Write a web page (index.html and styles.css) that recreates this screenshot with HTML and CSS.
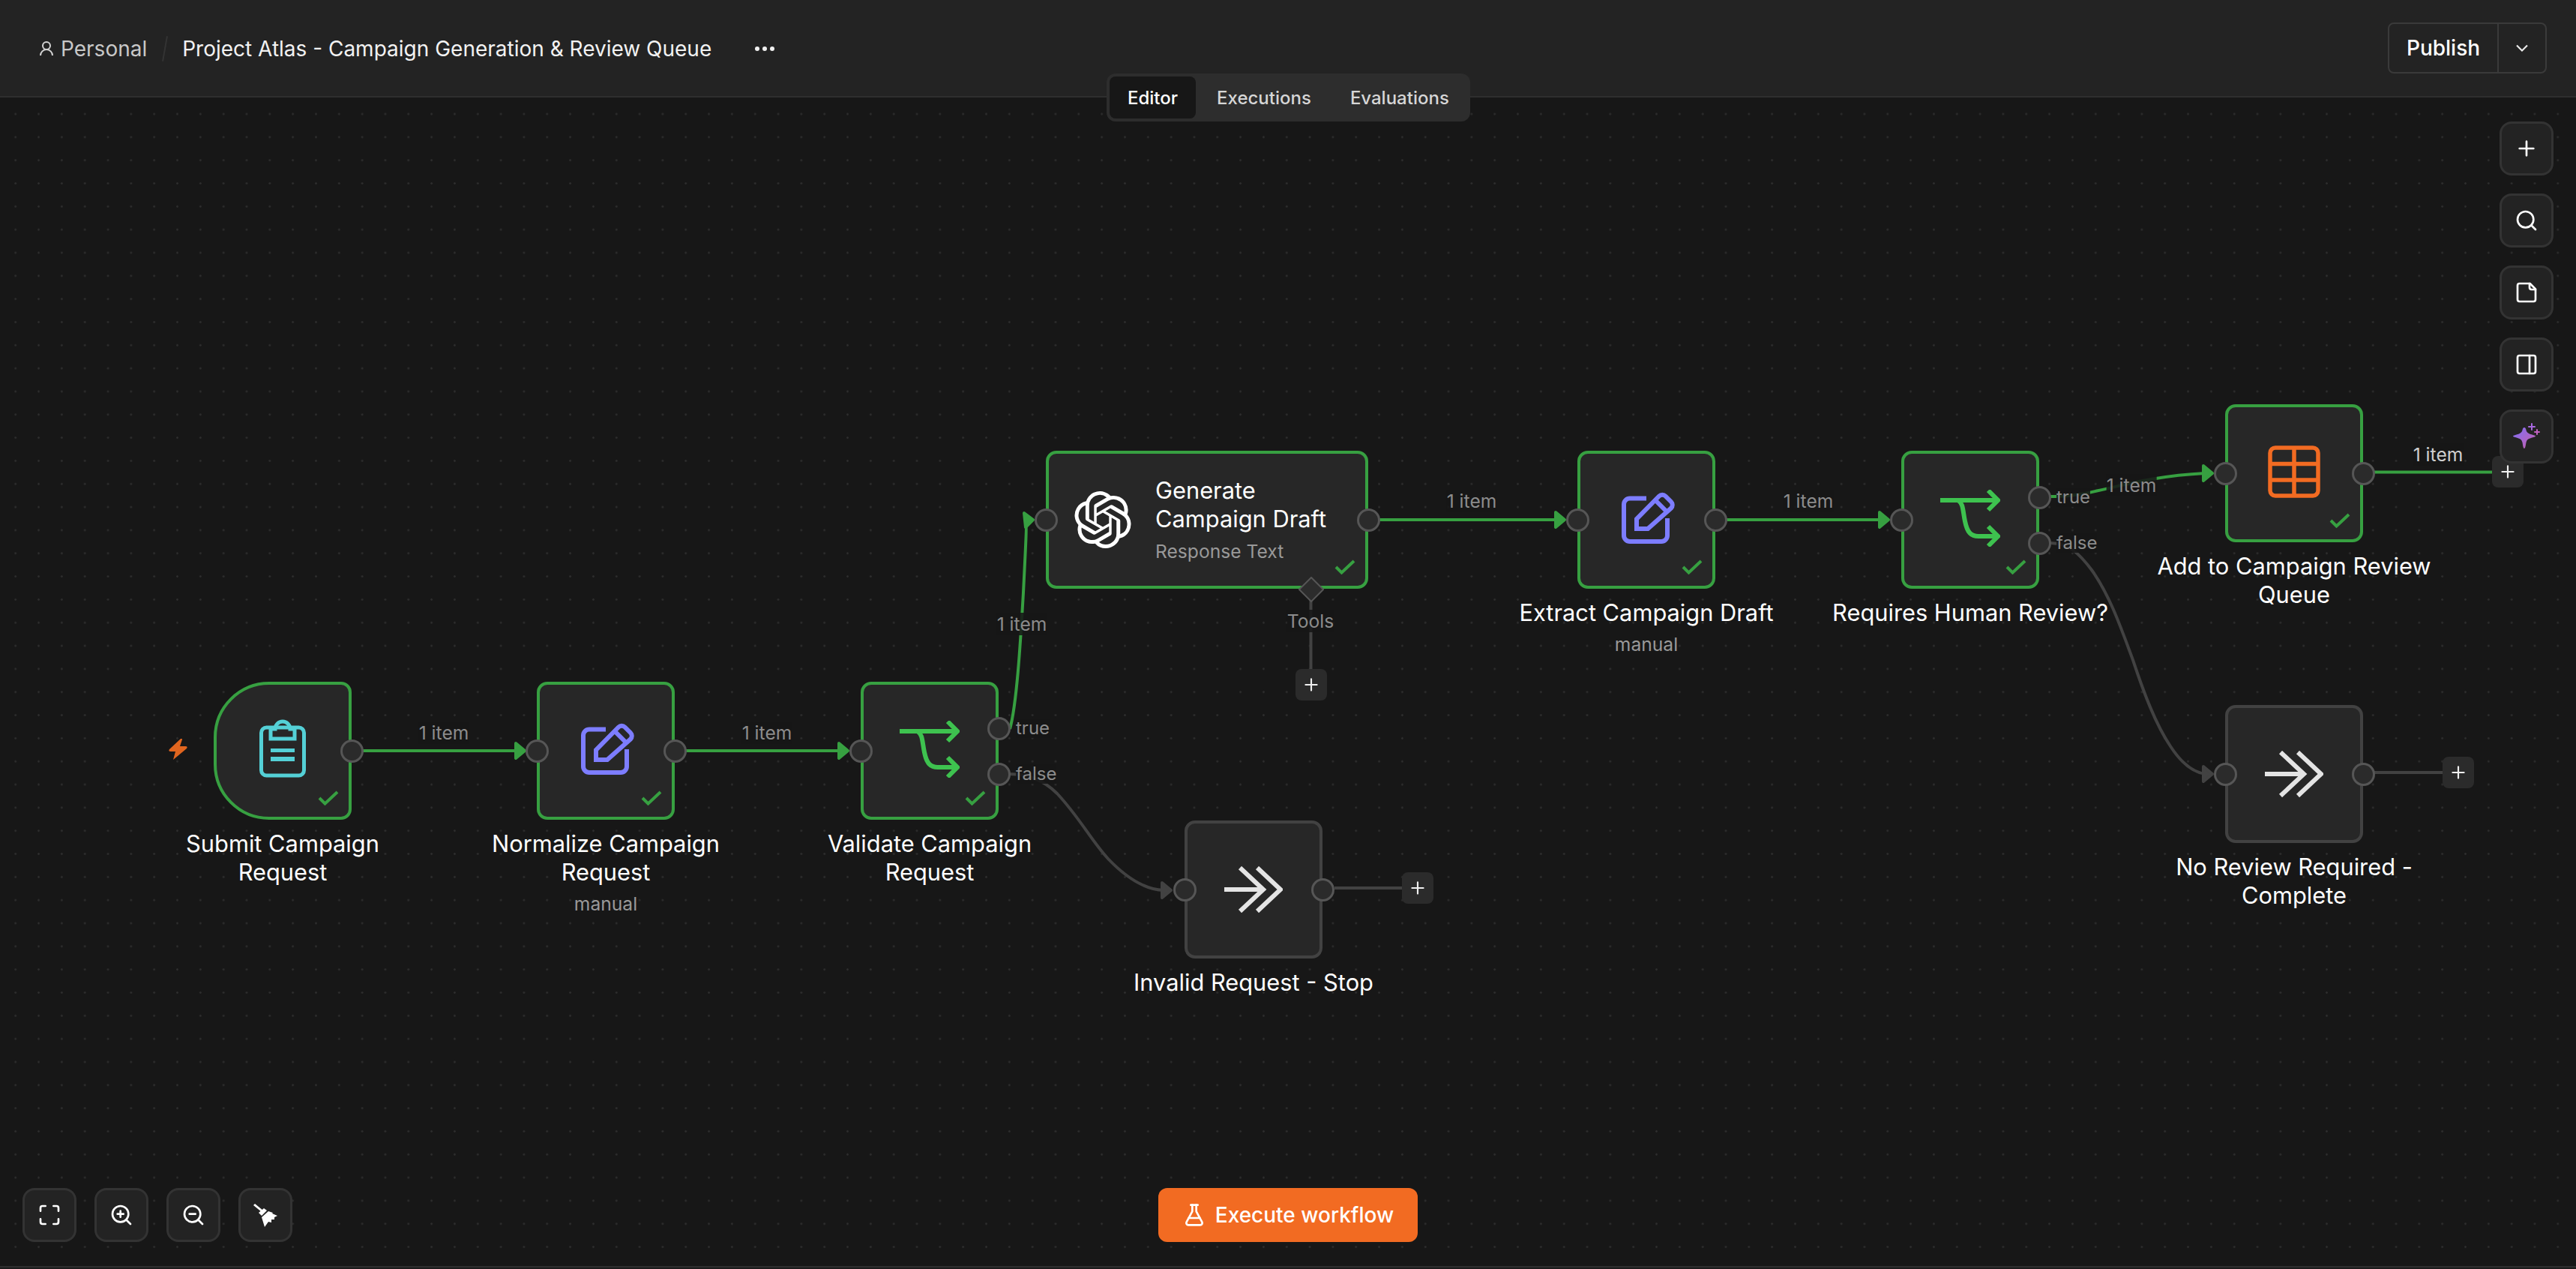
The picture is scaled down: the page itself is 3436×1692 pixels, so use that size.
FILE: index.html
```html
<!DOCTYPE html>
<html lang="en">
<head>
    <meta charset="UTF-8">
    <title>Project Atlas - Campaign Generation &amp; Review Queue</title>
    <link rel="stylesheet" href="styles.css">
</head>
<body>
    <svg class="sprite" aria-hidden="true">
        <symbol id="i-check" viewBox="0 0 28 20"><path d="M2 10l7.500 7.500L26 2" fill="none" stroke="currentColor" stroke-width="4"/></symbol>
        <symbol id="i-plus" viewBox="0 0 24 24"><path d="M5 12h14M12 5v14" fill="none" stroke="currentColor" stroke-width="2" stroke-linecap="round"/></symbol>
        <symbol id="i-pen" viewBox="0 0 72 72"><g fill="none" stroke="currentColor" stroke-width="6"><path d="M33 10.500H11a8 8 0 0 0-8 8V60a8 8 0 0 0 8 8H53a8 8 0 0 0 8-8V37"/><path d="M20 51V38L50 7.500a6 6 0 0 1 8.500 0l7.500 7.500a6 6 0 0 1 0 8.500L35 51z"/><path d="M45 13l15 15"/></g></symbol>
        <symbol id="i-switch" viewBox="0 0 80 76"><g fill="none" stroke="currentColor" stroke-width="6"><path d="M0 14h76"/><path d="M64 1l13 13-13 13"/><path d="M24 14c7 5 6 14 9 28 3 15 8 20 18 20h25"/><path d="M64 49l13 13-13 13"/></g></symbol>
        <symbol id="i-noop" viewBox="0 0 78 62"><g fill="none" stroke="currentColor" stroke-width="6"><path d="M0 31h50"/><path d="M21 2l31 29-31 29"/><path d="M44 2l31 29-31 29"/></g></symbol>
    </svg>

    <header class="topbar">
        <div class="crumbs">
            <svg class="crumb-icon" viewBox="0 0 24 24"><circle cx="12" cy="8" r="5"/><path d="M20 21a8 8 0 0 0-16 0"/></svg>
            <span class="crumb-project">Personal</span>
            <span class="crumb-slash"></span>
            <span class="crumb-title">Project Atlas - Campaign Generation &amp; Review Queue</span>
            <span class="crumb-more"><i></i><i></i><i></i></span>
        </div>
        <div class="publish">
            <span class="publish-main">Publish</span>
            <span class="publish-caret">
                <svg viewBox="0 0 24 24"><path d="M6 9l6 6 6-6"/></svg>
            </span>
        </div>
    </header>

    <nav class="tabs">
        <span class="tab active">Editor</span>
        <span class="tab">Executions</span>
        <span class="tab">Evaluations</span>
    </nav>

    <main class="canvas">
        <svg class="wires" width="3436" height="1558" viewBox="0 130 3436 1558">
            <g class="wire-ok">
                <path d="M483 1001H690"/>
                <path d="M915 1001H1121"/>
                <path d="M1347 972C1356 940 1361 860 1365 790C1368 730 1370 694 1368 693"/>
                <path d="M1840 693H2077"/>
                <path d="M2302 693H2509"/>
                <path d="M2735 662C2790 664 2840 636 2941 631"/>
                <path d="M3167 629.500H3330"/>
            </g>
            <g class="arrow-ok">
                <path d="M688 991L700 1001L688 1011Z"/>
                <path d="M1119 991L1131 1001L1119 1011Z"/>
                <path d="M1366 684L1378 693L1368 703Z"/>
                <path d="M2075 683L2087 693L2075 703Z"/>
                <path d="M2507 683L2519 693L2507 703Z"/>
                <path d="M2939 621L2951 631L2939 641Z"/>
            </g>
            <g class="wire-idle">
                <path d="M1346 1032C1372 1032 1392 1040 1410 1058C1440 1090 1455 1120 1478 1145C1500 1168 1525 1186 1552 1187"/>
                <path d="M2735 724C2760 724 2775 740 2790 760C2815 795 2830 840 2845 880C2860 925 2875 965 2895 995C2910 1018 2925 1030 2942 1032"/>
                <path d="M1780 1184H1875"/>
                <path d="M3167 1030H3262"/>
                <path d="M1748.500 800V895"/>
            </g>
            <g class="arrow-idle">
                <path d="M1550 1177L1562 1187L1550 1197Z"/>
                <path d="M2939 1022L2951 1032L2939 1042Z"/>
            </g>
        </svg>

        <svg class="bolt" viewBox="0 0 27 28"><path d="M17 0L2 14q-2 3 2 3h6L7 28l18-15q2-3-2-3h-7l3-9q0-2-2-1z"/></svg>

        <div class="node node-submit">
            <div class="node-box trigger ok">
                <svg class="icon-form" viewBox="0 0 62 78">
                    <rect x="2.500" y="11" width="57" height="64" rx="7"/>
                    <path d="M15 26V13h6a10 10 0 0 1 20 0h6v13z"/>
                    <rect class="fill" x="15" y="39" width="32" height="5"/>
                    <rect class="fill" x="15" y="50" width="32" height="6"/>
                </svg>
                <span class="port out"></span>
                <svg class="node-check"><use href="#i-check"/></svg>
            </div>
            <div class="node-label">Submit Campaign<br>Request</div>
        </div>

        <div class="node node-normalize">
            <div class="node-box ok">
                <svg class="icon-pen"><use href="#i-pen"/></svg>
                <span class="port in"></span>
                <span class="port out"></span>
                <svg class="node-check"><use href="#i-check"/></svg>
            </div>
            <div class="node-label">Normalize Campaign<br>Request</div>
            <div class="node-sub">manual</div>
        </div>

        <div class="node node-validate">
            <div class="node-box ok">
                <svg class="icon-switch"><use href="#i-switch"/></svg>
                <span class="port in"></span>
                <span class="port out first"></span>
                <span class="port out second"></span>
                <span class="port-label first">true</span>
                <span class="port-label second">false</span>
                <svg class="node-check"><use href="#i-check"/></svg>
            </div>
            <div class="node-label">Validate Campaign<br>Request</div>
        </div>

        <div class="node node-generate">
            <div class="node-box wide ok">
                <svg class="icon-openai" viewBox="0 0 24 24"><path d="M22.2819 9.8211a5.9847 5.9847 0 0 0-.5157-4.9108 6.0462 6.0462 0 0 0-6.5098-2.9A6.0651 6.0651 0 0 0 4.9807 4.1818a5.9847 5.9847 0 0 0-3.9977 2.9 6.0462 6.0462 0 0 0 .7427 7.0966 5.98 5.98 0 0 0 .511 4.9107 6.051 6.051 0 0 0 6.5146 2.9001A5.9847 5.9847 0 0 0 13.2599 24a6.0557 6.0557 0 0 0 5.7718-4.2058 5.9894 5.9894 0 0 0 3.9977-2.9001 6.0557 6.0557 0 0 0-.7475-7.0729zm-9.022 12.6081a4.4755 4.4755 0 0 1-2.8764-1.0408l.1419-.0804 4.7783-2.7582a.7948.7948 0 0 0 .3927-.6813v-6.7369l2.02 1.1686a.071.071 0 0 1 .038.052v5.5826a4.504 4.504 0 0 1-4.4945 4.4944zm-9.6607-4.1254a4.4708 4.4708 0 0 1-.5346-3.0137l.142.0852 4.783 2.7582a.7712.7712 0 0 0 .7806 0l5.8428-3.3685v2.3324a.0804.0804 0 0 1-.0332.0615L9.74 19.9502a4.4992 4.4992 0 0 1-6.1408-1.6464zM2.3408 7.8956a4.485 4.485 0 0 1 2.3655-1.9728V11.6a.7664.7664 0 0 0 .3879.6765l5.8144 3.3543-2.0201 1.1685a.0757.0757 0 0 1-.071 0l-4.8303-2.7865A4.504 4.504 0 0 1 2.3408 7.872zm16.5963 3.8558L13.1038 8.364 15.1192 7.2a.0757.0757 0 0 1 .071 0l4.8303 2.7913a4.4944 4.4944 0 0 1-.6765 8.1042v-5.6772a.79.79 0 0 0-.407-.667zm2.0107-3.0231l-.142-.0852-4.7735-2.7818a.7759.7759 0 0 0-.7854 0L9.409 9.2297V6.8974a.0662.0662 0 0 1 .0284-.0615l4.8303-2.7866a4.4992 4.4992 0 0 1 6.6802 4.66zM8.3065 12.863l-2.02-1.1638a.0804.0804 0 0 1-.038-.0567V6.0742a4.4992 4.4992 0 0 1 7.3757-3.4537l-.142.0805L8.704 5.459a.7948.7948 0 0 0-.3927.6813zm1.0976-2.3654l2.602-1.4998 2.6069 1.4998v2.9994l-2.5974 1.4997-2.6067-1.4997Z"/></svg>
                <div class="node-text">
                    <div class="node-title">Generate<br>Campaign Draft</div>
                    <div class="node-hint">Response Text</div>
                </div>
                <span class="port in"></span>
                <span class="port out"></span>
                <svg class="node-check"><use href="#i-check"/></svg>
                <svg class="tool-diamond" viewBox="0 0 34 34"><path d="M17 1l16 16-16 16L1 17z"/></svg>
            </div>
        </div>

        <div class="node node-extract">
            <div class="node-box ok">
                <svg class="icon-pen"><use href="#i-pen"/></svg>
                <span class="port in"></span>
                <span class="port out"></span>
                <svg class="node-check"><use href="#i-check"/></svg>
            </div>
            <div class="node-label">Extract Campaign Draft</div>
            <div class="node-sub">manual</div>
        </div>

        <div class="node node-requires">
            <div class="node-box ok">
                <svg class="icon-switch"><use href="#i-switch"/></svg>
                <span class="port in"></span>
                <span class="port out first"></span>
                <span class="port out second"></span>
                <span class="port-label first">true</span>
                <span class="port-label second">false</span>
                <svg class="node-check"><use href="#i-check"/></svg>
            </div>
            <div class="node-label">Requires Human Review?</div>
        </div>

        <div class="node node-add">
            <div class="node-box ok">
                <svg class="icon-table" viewBox="0 0 70 70">
                    <rect x="3" y="3" width="64" height="64" rx="7"/>
                    <path d="M35 3v64M3 24.500h64M3 46h64"/>
                </svg>
                <span class="port in"></span>
                <span class="port out"></span>
                <svg class="node-check"><use href="#i-check"/></svg>
            </div>
            <div class="node-label">Add to Campaign Review<br>Queue</div>
        </div>

        <div class="node node-noreview">
            <div class="node-box">
                <svg class="icon-noop"><use href="#i-noop"/></svg>
                <span class="port in"></span>
                <span class="port out"></span>
            </div>
            <div class="node-label">No Review Required -<br>Complete</div>
        </div>

        <div class="node node-invalid">
            <div class="node-box">
                <svg class="icon-noop"><use href="#i-noop"/></svg>
                <span class="port in"></span>
                <span class="port out"></span>
            </div>
            <div class="node-label">Invalid Request - Stop</div>
        </div>

        <span class="edge-label el-1">1 item</span>
        <span class="edge-label el-2">1 item</span>
        <span class="edge-label el-3">1 item</span>
        <span class="edge-label el-4">1 item</span>
        <span class="edge-label el-5">1 item</span>
        <span class="edge-label el-6">1 item</span>
        <span class="edge-label el-7">1 item</span>
        <span class="edge-label el-tools">Tools</span>

        <span class="add-btn add-tools"><svg><use href="#i-plus"/></svg></span>
        <span class="add-btn add-invalid"><svg><use href="#i-plus"/></svg></span>
        <span class="add-btn add-noreview"><svg><use href="#i-plus"/></svg></span>
        <span class="add-btn add-queue"><svg><use href="#i-plus"/></svg></span>

        <div class="toolbar toolbar-right">
            <span class="tool-btn"><svg viewBox="0 0 24 24"><path d="M5 12h14M12 5v14"/></svg></span>
            <span class="tool-btn"><svg viewBox="0 0 24 24"><circle cx="11" cy="11" r="8"/><path d="M21 21l-4.300-4.300"/></svg></span>
            <span class="tool-btn"><svg viewBox="0 0 24 24"><path d="M15.500 3H5a2 2 0 0 0-2 2v14c0 1.100.9 2 2 2h14a2 2 0 0 0 2-2V8.500L15.500 3z"/><path d="M15 3v4a2 2 0 0 0 2 2h4"/></svg></span>
            <span class="tool-btn"><svg viewBox="0 0 24 24"><rect x="3" y="3" width="18" height="18" rx="2"/><path d="M15 3v18"/></svg></span>
            <span class="tool-btn">
                <svg class="icon-spark" viewBox="0 0 36 36">
                    <defs>
                        <linearGradient id="spark" x1="0" y1="0" x2="1" y2="1">
                            <stop offset="0" stop-color="#7f6ff8"/>
                            <stop offset="1" stop-color="#c95fa8"/>
                        </linearGradient>
                    </defs>
                    <path fill="url(#spark)" d="M15 6c1.500 0 2 1.500 2.500 3.500 1 3.500 2.500 4.500 9.500 6.500 2 .5 3 1 3 1.500s-1 1-3 1.500c-7 2-8.500 3-9.500 7-.5 2.500-1 8-2.500 8s-2-5.500-2.500-8c-1-4-2.500-5-9.500-7C1 18.500 0 18 0 17.500S1 16.500 3 16c7-2 8.500-3 9.500-6.500C13 7.500 13.500 6 15 6z"/>
                    <path class="spark-small" d="M25 1v8M21 5h8"/>
                    <path class="spark-small pink" d="M32 9v6M29 12h6"/>
                </svg>
            </span>
        </div>

        <div class="toolbar toolbar-left">
            <span class="tool-btn"><svg viewBox="0 0 24 24"><path d="M8 3H5a2 2 0 0 0-2 2v3M21 8V5a2 2 0 0 0-2-2h-3M3 16v3a2 2 0 0 0 2 2h3M16 21h3a2 2 0 0 0 2-2v-3"/></svg></span>
            <span class="tool-btn"><svg viewBox="0 0 24 24"><circle cx="11" cy="11" r="8"/><path d="M21 21l-4.350-4.350M11 8v6M8 11h6"/></svg></span>
            <span class="tool-btn"><svg viewBox="0 0 24 24"><circle cx="11" cy="11" r="8"/><path d="M21 21l-4.350-4.350M8 11h6"/></svg></span>
            <span class="tool-btn"><svg class="icon-broom" viewBox="0 0 32 32"><path d="M2 1l11 9-2 2L0 3z"/><path d="M7 13l7-6 4 3-7 7z"/><path d="M11 19l9-8 6 2-1 1 7 3-4 2v3h-4v4l-4-1-5 7z"/></svg></span>
        </div>

        <div class="execute">
            <svg viewBox="0 0 24 24"><path d="M14 2v6a2 2 0 0 0 .245.96l5.510 10.080A2 2 0 0 1 18 22H6a2 2 0 0 1-1.755-2.960l5.510-10.080A2 2 0 0 0 10 8V2"/><path d="M6.453 15h11.094"/><path d="M8.500 2h7"/></svg>
            <span>Execute workflow</span>
        </div>
    </main>
    <div class="page-end"></div>
</body>
</html>
```

FILE: styles.css
```css
* {
    box-sizing: border-box;
}
body {
    margin: 0;
    height: 100vh;
    display: flex;
    flex-direction: column;
    position: relative;
    overflow: hidden;
    background-color: #171717;
    color: #fff;
    font-family: Inter, "Noto Sans", sans-serif;
}
.sprite {
    display: none;
}

/* top bar */
.topbar {
    height: 130px;
    flex-shrink: 0;
    display: flex;
    align-items: center;
    justify-content: space-between;
    padding: 0 39px 0 50px;
    background-color: #232323;
    border-bottom: 2px solid #2e2e2e;
}
.crumbs {
    display: flex;
    align-items: center;
    margin-top: 2px;
}
.crumb-icon {
    width: 24px;
    height: 24px;
    fill: none;
    stroke: #d4d4d4;
    stroke-width: 2;
    margin-right: 7px;
}
.crumb-project {
    font-size: 28px;
    color: #c8c8c8;
}
.crumb-slash {
    width: 2px;
    height: 34px;
    margin: 0 22px 0 23px;
    background-color: #333;
    transform: rotate(10deg);
}
.crumb-title {
    font-size: 28px;
    color: #f2f2f2;
}
.crumb-more {
    display: flex;
    gap: 4px;
    margin-left: 58px;
}
.crumb-more i {
    width: 6px;
    height: 6px;
    border-radius: 50%;
    background-color: #f0f0f0;
}
.publish {
    display: flex;
    height: 68px;
    border: 2px solid #3a3a3a;
    border-radius: 8px;
    font-size: 28px;
    font-weight: 500;
}
.publish-main {
    width: 146px;
    display: flex;
    align-items: center;
    justify-content: center;
    border-right: 2px solid #3a3a3a;
}
.publish-caret {
    width: 62px;
    display: flex;
    align-items: center;
    justify-content: center;
}
.publish-caret svg {
    width: 28px;
    height: 28px;
    fill: none;
    stroke: #eee;
    stroke-width: 1.8;
}
.tabs {
    position: absolute;
    top: 98px;
    left: 1476px;
    height: 64px;
    display: flex;
    gap: 4px;
    padding: 4px;
    background-color: #2d2d2d;
    border-radius: 12px;
    z-index: 5;
}
.tab {
    display: flex;
    align-items: center;
    padding: 0 24px;
    border-radius: 8px;
    font-size: 24px;
    font-weight: 500;
    color: #d6d6d6;
}
.tab.active {
    background-color: #171717;
    color: #fff;
}

/* canvas */
.canvas {
    position: relative;
    height: 1558px;
    flex-shrink: 0;
    overflow: hidden;
    background-color: #171717;
    background-image: radial-gradient(circle, #2d2d2d 1.1px, transparent 1.6px);
    background-size: 30.84px 30.84px;
    background-position: 5.3px 6.6px;
}
.page-end {
    flex: 1;
    border-top: 2px solid #2e2e2e;
    background-color: #1c1c1c;
}
.wires {
    position: absolute;
    left: 0;
    top: 0;
}
.wires path {
    fill: none;
    stroke-width: 4;
}
.wire-ok path {
    stroke: #37a041;
}
.wire-idle path {
    stroke: #424242;
}
.wires .arrow-ok path {
    fill: #37a041;
    stroke: #37a041;
    stroke-linejoin: round;
}
.wires .arrow-idle path {
    fill: #424242;
    stroke: #424242;
    stroke-linejoin: round;
}
.bolt {
    position: absolute;
    left: 224px;
    top: 855px;
    width: 27px;
    height: 28px;
    fill: #e0651f;
}

/* nodes */
.node {
    position: absolute;
    width: 184px;
    display: flex;
    flex-direction: column;
    align-items: center;
}
.node-submit { left: 285px; top: 779px; }
.node-normalize { left: 716px; top: 779px; }
.node-validate { left: 1148px; top: 779px; }
.node-generate { left: 1395px; top: 471px; width: 430px; }
.node-extract { left: 2104px; top: 471px; }
.node-requires { left: 2536px; top: 471px; }
.node-add { left: 2968px; top: 409px; }
.node-noreview { left: 2968px; top: 810px; }
.node-invalid { left: 1580px; top: 964px; }

.node-box {
    position: relative;
    width: 100%;
    height: 184px;
    display: flex;
    align-items: center;
    justify-content: center;
    background-color: #272727;
    border: 4px solid #424242;
    border-radius: 14px;
}
.node-box.ok {
    border-color: #37a041;
}
.node-box.trigger {
    border-radius: 74px 14px 14px 74px;
}
.node-box.wide {
    justify-content: flex-start;
    padding-left: 34px;
}
.node-label {
    width: 400px;
    flex-shrink: 0;
    margin-top: 13px;
    text-align: center;
    font-size: 30.8px;
    line-height: 38px;
}
.node-sub {
    margin-top: 7px;
    font-size: 24.64px;
    line-height: 32px;
    color: #999;
}
.node-text {
    margin-left: 32px;
}
.node-title {
    font-size: 30.8px;
    line-height: 38px;
}
.node-hint {
    margin-top: 8px;
    font-size: 24.64px;
    line-height: 32px;
    color: #999;
}
.node-check {
    position: absolute;
    right: 13px;
    bottom: 15px;
    width: 28px;
    height: 20px;
    color: #37a041;
}

/* ports */
.port {
    position: absolute;
    top: 72.5px;
    width: 31px;
    height: 31px;
    border-radius: 50%;
    background-color: #2b2b2b;
    border: 3px solid #565656;
}
.port.in {
    left: -19px;
}
.port.out {
    right: -20px;
}
.port.first {
    top: 42.5px;
}
.port.second {
    top: 103.5px;
}
.port-label {
    position: absolute;
    left: calc(100% + 27px);
    font-size: 24px;
    line-height: 26px;
    color: #8c8c8c;
    background-color: rgba(23, 23, 23, 0.88);
}
.port-label.first {
    top: 45px;
}
.port-label.second {
    top: 106px;
}
.tool-diamond {
    position: absolute;
    left: 333px;
    top: 164px;
    width: 34px;
    height: 34px;
    fill: #2c2c2c;
    stroke: #565656;
    stroke-width: 2;
}

/* node icons */
.icon-form {
    width: 62px;
    height: 78px;
    margin-top: -6px;
    fill: none;
    stroke: #54d0d6;
    stroke-width: 5;
}
.icon-form .fill {
    fill: #54d0d6;
    stroke: none;
}
.icon-pen {
    width: 72px;
    height: 72px;
    margin: -6px 0 0 5px;
    color: #7d7dff;
}
.icon-switch {
    width: 80px;
    height: 76px;
    margin-top: -4px;
    color: #3ec24f;
}
.icon-noop {
    width: 78px;
    height: 62px;
    color: #e4e4e4;
}
.icon-openai {
    width: 76px;
    height: 76px;
    fill: #fff;
}
.icon-table {
    width: 70px;
    height: 70px;
    margin-top: -4px;
    fill: none;
    stroke: #f26b22;
    stroke-width: 5.5;
}

/* labels on the wires */
.edge-label {
    position: absolute;
    transform: translate(-50%, -50%);
    font-size: 24.64px;
    line-height: 30px;
    color: #8c8c8c;
    background-color: rgba(23, 23, 23, 0.88);
}
.el-1 { left: 592px; top: 847px; }
.el-2 { left: 1023px; top: 847px; }
.el-3 { left: 1363px; top: 702px; }
.el-4 { left: 1963px; top: 538px; }
.el-5 { left: 2412px; top: 538px; }
.el-6 { left: 2843px; top: 517px; }
.el-7 { left: 3252px; top: 476px; color: #cfcfcf; }
.el-tools { left: 1748px; top: 698px; }

.add-btn {
    position: absolute;
    width: 42px;
    height: 42px;
    display: flex;
    align-items: center;
    justify-content: center;
    background-color: #2b2b2b;
    border-radius: 8px;
    color: #f0f0f0;
}
.add-btn svg {
    width: 26px;
    height: 26px;
}
.add-tools { left: 1728px; top: 762px; }
.add-invalid { left: 1870px; top: 1033px; }
.add-noreview { left: 3258px; top: 879px; }
.add-queue { left: 3324px; top: 478px; }

/* floating buttons */
.toolbar {
    position: absolute;
    display: flex;
    gap: 24px;
}
.toolbar-right {
    right: 30px;
    top: 32px;
    flex-direction: column;
}
.toolbar-left {
    left: 30px;
    bottom: 32px;
}
.tool-btn {
    width: 72px;
    height: 72px;
    display: flex;
    align-items: center;
    justify-content: center;
    background-color: #232323;
    border: 3px solid #333;
    border-radius: 16px;
}
.tool-btn svg {
    width: 32px;
    height: 32px;
    fill: none;
    stroke: #fff;
    stroke-width: 2;
    stroke-linecap: round;
    stroke-linejoin: round;
}
.tool-btn .icon-spark {
    width: 36px;
    height: 36px;
    stroke: none;
}
.spark-small {
    stroke: #a868e0;
    stroke-width: 2;
}
.spark-small.pink {
    stroke: #c060c0;
}
.tool-btn .icon-broom {
    fill: #fff;
    stroke: none;
}
.execute {
    position: absolute;
    left: 1545px;
    bottom: 32px;
    width: 346px;
    height: 72px;
    display: flex;
    align-items: center;
    justify-content: center;
    gap: 12px;
    background-color: #f26b22;
    border-radius: 12px;
    font-size: 28px;
    font-weight: 500;
}
.execute svg {
    width: 32px;
    height: 32px;
    fill: none;
    stroke: #fff;
    stroke-width: 2;
    stroke-linecap: round;
    stroke-linejoin: round;
}
```
